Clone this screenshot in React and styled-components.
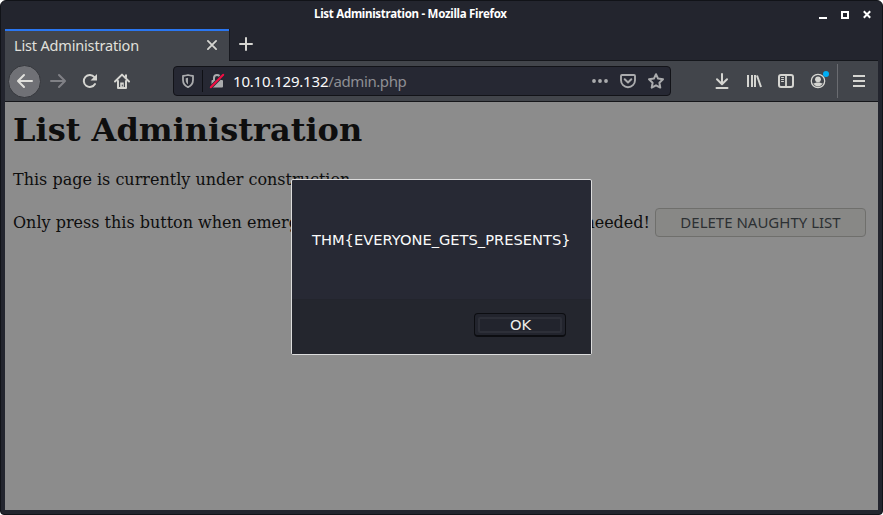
import React from 'react';
import styled, { createGlobalStyle } from 'styled-components';

const GlobalStyle = createGlobalStyle`
  * { box-sizing: border-box; }
  html, body { margin: 0; background: #fff; overflow: hidden; }
`;

const Window = styled.div`
  width: 883px;
  height: 515px;
  display: flex;
  flex-direction: column;
  padding: 0 4px 4px;
  border: 1px solid #111318;
  border-radius: 6px 6px 4px 4px;
  background: #23252e;
  font-family: 'Noto Sans', sans-serif;
  overflow: hidden;
`;

const TitleBar = styled.header`
  height: 28px;
  flex: none;
  display: grid;
  grid-template-columns: 309px 1fr auto;
  align-items: center;
  color: #fff;
`;

const WindowTitle = styled.div`
  grid-column: 2;
  padding-bottom: 3px;
  font-size: 11.5px;
  font-weight: 700;
  letter-spacing: -0.28px;
  white-space: nowrap;
`;

const WindowButtons = styled.div`
  display: flex;
  margin: 0 7px 3px 0;
`;

const TabStrip = styled.div`
  height: 32px;
  flex: none;
  display: flex;
`;

const Tab = styled.div`
  width: 224px;
  height: 32px;
  display: flex;
  align-items: center;
  justify-content: space-between;
  padding: 0 12px 2px 9px;
  border-top: 2px solid #2a76f0;
  background: #42454b;
  color: #e0e0dc;
  font-size: 14.5px;
  letter-spacing: -0.17px;
  white-space: nowrap;
`;

const TabSpacer = styled.div`
  flex: 1;
  padding: 7px 0 0 8px;
  border-left: 1px solid #17191f;
  border-bottom: 1px solid #15171c;
`;

const Toolbar = styled.nav`
  height: 41px;
  flex: none;
  display: flex;
  align-items: center;
  background: #42454b;
  border-bottom: 1px solid #15161a;
`;

const Icon = styled.svg`
  display: block;
  flex: none;
  overflow: visible;
  fill: none;
  stroke: ${(p) => p.$color || '#d5d5d1'};
  stroke-width: ${(p) => p.$weight || 2};
  stroke-linecap: round;
  stroke-linejoin: round;
`;

const BackButton = styled.button`
  width: 33px;
  height: 33px;
  margin-left: 3px;
  padding: 0;
  display: grid;
  place-items: center;
  border: 1px solid #35373c;
  border-radius: 50%;
  background: #707176;
`;

const NavIcons = styled.div`
  display: flex;
  gap: 16px;
  margin-left: 9px;
`;

const AddressBar = styled.div`
  width: 498px;
  height: 30px;
  margin-left: 43px;
  padding: 0 6px;
  display: flex;
  align-items: center;
  border: 1px solid #121318;
  border-radius: 4px;
  background: #262833;
`;

const Separator = styled.span`
  width: 1px;
  height: ${(p) => p.$height}px;
  margin: ${(p) => p.$margin};
  background: ${(p) => p.$color};
`;

const Address = styled.div`
  flex: 1;
  margin-left: 8px;
  color: #fafafa;
  font-size: 15px;
  letter-spacing: -0.2px;
  white-space: nowrap;
`;

const Path = styled.span`
  color: #8e8f94;
  letter-spacing: -0.4px;
`;

const AddressActions = styled.div`
  display: flex;
  gap: 12px;
`;

const Tools = styled.div`
  display: flex;
  margin-left: 43px;
  gap: 16px;
`;

const Viewport = styled.main`
  flex: 1;
  display: grid;
  position: relative;
  background: #8c8c8c;
  color: #0e0e0e;
  font-family: 'DejaVu Serif', serif;
  font-size: 16px;
`;

const Page = styled.div`
  padding: 9px 8px 8px;
`;

const Heading = styled.h1`
  margin: 0;
  font-size: 32px;
  line-height: 38px;
`;

const Paragraph = styled.p`
  margin: 21px 0 0;
  line-height: 19px;
`;

const ActionLine = styled.div`
  display: flex;
  align-items: center;
  height: 29px;
  margin-top: 19px;
`;

const Sentence = styled.div`
  width: 637px;
  display: flex;
  justify-content: space-between;
  white-space: nowrap;
`;

const DeleteButton = styled.button`
  width: 211px;
  height: 29px;
  margin-left: 5px;
  padding: 0 0 1px;
  border: 1px solid #6f6f6c;
  border-radius: 4px;
  background: #888886;
  color: #2c3033;
  font: 15px 'Noto Sans', sans-serif;
  white-space: nowrap;
`;

const Dialog = styled.section`
  position: absolute;
  left: 286px;
  top: 77px;
  width: 301px;
  height: 176px;
  display: flex;
  flex-direction: column;
  border: 1px solid #dcdcdc;
  border-radius: 2px;
  background: #272934;
  color: #fafafa;
  font: 14.667px 'DejaVu Sans', sans-serif;
`;

const Message = styled.div`
  height: 119px;
  padding: 0 20px;
  display: flex;
  align-items: center;
  white-space: nowrap;
`;

const DialogFooter = styled.footer`
  flex: 1;
  display: flex;
  justify-content: flex-end;
  align-items: flex-start;
  padding: 13px 25px 0 0;
  border-top: 1px solid #23252d;
  background: #24262e;
`;

const OkButton = styled.button`
  width: 92px;
  height: 24px;
  padding: 3px;
  border: 1px solid #0c0d11;
  border-bottom-width: 2px;
  border-radius: 4px;
  background: #22242d;
  color: #eeeeea;
  font: 14.667px 'DejaVu Sans', sans-serif;
`;

const FocusRing = styled.span`
  height: 16px;
  display: flex;
  align-items: center;
  justify-content: center;
  padding: 0 0 1px 1px;
  border: 2px solid #2d2f38;
  border-radius: 2px;
  line-height: 12px;
`;

export default function App() {
  return (
    <>
      <GlobalStyle />
      <Window>
        <TitleBar>
          <WindowTitle>List Administration - Mozilla Firefox</WindowTitle>
          <WindowButtons>
            <Icon width="55" height="10" viewBox="0 0 55 10" $color="#fff">
              <path d="M3 9h8M26 3h6v6h-6z" strokeLinecap="butt" strokeLinejoin="miter" />
              <path d="M48.5 3l5 5M53.5 3l-5 5" strokeLinecap="square" />
            </Icon>
          </WindowButtons>
        </TitleBar>

        <TabStrip>
          <Tab>
            List Administration
            <Icon width="10" height="10" viewBox="0 0 10 10" $weight={1.8}>
              <path d="M.9.9l8.2 8.2M9.1.9L.9 9.1" />
            </Icon>
          </Tab>
          <TabSpacer>
            <Icon width="16" height="16" viewBox="0 0 16 16">
              <path d="M8 2v12M2 8h12" />
            </Icon>
          </TabSpacer>
        </TabStrip>

        <Toolbar>
          <BackButton aria-label="Back">
            <Icon width="16" height="16" viewBox="0 0 16 16" $color="#e0e0dc">
              <path d="M15 8H1.5M7 2L1 8l6 6" />
            </Icon>
          </BackButton>
          <NavIcons>
            <Icon width="16" height="16" viewBox="0 0 16 16" $color="#808186">
              <path d="M1 8h13.5M9 2l6 6-6 6" />
            </Icon>
            <Icon width="16" height="16" viewBox="0 0 16 16">
              <path d="M13 11a6 6 0 1 1-.6-6.9" />
              <path d="M15 1v6.5H8.5z" fill="#d5d5d1" stroke="none" />
            </Icon>
            <Icon width="16" height="16" viewBox="0 0 16 16">
              <path d="M1 8.5L8 1.6l7 6.9M4 8v7h8V8" />
              <path d="M11 1.5h2v4l-2-2z" fill="#d5d5d1" stroke="none" />
              <path d="M6.2 15V9.5h3.6V15z" fill="#d5d5d1" stroke="none" />
              <path d="M8.3 12v1" stroke="#42454b" strokeWidth="1" />
            </Icon>
          </NavIcons>

          <AddressBar>
            <Icon width="16" height="16" viewBox="0 0 16 16" $color="#aaabad" $weight={1.8}>
              <path d="M8 2c2 .6 3.5.8 5 1v4c0 3.2-2 5.8-5 7.2C5 12.8 3 10.2 3 7V3c1.5-.2 3-.4 5-1z" />
              <path d="M8 4.8v6.7C6.5 10.4 5.7 9 5.7 7V5.2z" fill="#aaabad" stroke="none" />
            </Icon>
            <Separator $height={22} $margin="0 6px" $color="#0f1015" />
            <Icon width="16" height="16" viewBox="0 0 16 16" $color="#aaabad" $weight={2}>
              <path d="M5 8V5a3 3 0 0 1 6 0v3" />
              <rect x="2.5" y="7" width="11.5" height="7.5" rx="1" fill="#aaabad" stroke="none" />
              <path d="M1.8 14.2L14.2 1.8" stroke="#262833" strokeWidth="3.4" strokeLinecap="butt" />
              <path d="M1.8 14.2L14.2 1.8" stroke="#f30e43" strokeWidth="2" />
            </Icon>
            <Address>10.10.129.132<Path>/admin.php</Path></Address>
            <AddressActions>
              <Icon width="16" height="16" viewBox="0 0 16 16" $color="#aaabad">
                <path d="M2 8h.01M8 8h.01M14 8h.01" strokeWidth="3.8" />
              </Icon>
              <Icon width="16" height="16" viewBox="0 0 16 16" $color="#aaabad" $weight={1.9}>
                <path d="M2 2h12q1 0 1 1v4.2a7 7 0 0 1-14 0V3q0-1 1-1z" />
                <path d="M4.7 6.3L8 9.5l3.3-3.2" strokeWidth="2" />
              </Icon>
              <Icon width="16" height="16" viewBox="0 0 16 16" $color="#aaabad" $weight={2}>
                <path d="M8 1.2l2.1 4.4 4.9.7-3.6 3.4.9 4.9L8 12.3l-4.3 2.3.9-4.9L1 6.3l4.9-.7z" />
              </Icon>
            </AddressActions>
          </AddressBar>

          <Tools>
            <Icon width="16" height="16" viewBox="0 0 16 16">
              <path d="M8 1v10M3 6.3L8 11.2l5-4.9M2.5 15h11" />
            </Icon>
            <Icon width="16" height="16" viewBox="0 0 16 16">
              <path d="M2 2v12M6 2v12M9 2v12M11 2.5L15 14" strokeLinecap="butt" />
            </Icon>
            <Icon width="16" height="16" viewBox="0 0 16 16">
              <rect x="1" y="2" width="14" height="12" rx="2" />
              <path d="M8 2v12" strokeWidth="1.8" />
              <path d="M3.5 4.5h2M3.5 6.5h2M3.5 8.5h2" strokeWidth="1" />
            </Icon>
            <Icon width="16" height="16" viewBox="0 0 16 16" $weight={1.3}>
              <circle cx="8" cy="8" r="6.7" />
              <circle cx="8" cy="6.3" r="2.9" fill="#d5d5d1" stroke="none" />
              <path d="M3.3 10.3c1.8 0 2.2-.5 2.9-.9h3.6c.7.4 1.1.9 2.9.9A5.2 5.2 0 0 1 8 13.4a5.2 5.2 0 0 1-4.7-3.1z" fill="#d5d5d1" stroke="none" />
              <circle cx="16" cy="1" r="3" fill="#00aef5" stroke="none" />
            </Icon>
          </Tools>
          <Separator $height={34} $margin="0 14px 0 11px" $color="#6a6c71" />
          <Icon width="14" height="14" viewBox="0 0 14 14">
            <path d="M1 2h12M1 7h12M1 12h12" strokeLinecap="butt" />
          </Icon>
        </Toolbar>

        <Viewport>
          <Page>
            <Heading>List Administration</Heading>
            <Paragraph>This page is currently under construction.</Paragraph>
            <ActionLine>
              <Sentence>
                <span>Only press this button when emergency</span>
                <span>needed!</span>
              </Sentence>
              <DeleteButton>DELETE NAUGHTY LIST</DeleteButton>
            </ActionLine>
          </Page>
          <Dialog role="dialog">
            <Message>THM&#123;EVERYONE_GETS_PRESENTS&#125;</Message>
            <DialogFooter>
              <OkButton><FocusRing>OK</FocusRing></OkButton>
            </DialogFooter>
          </Dialog>
        </Viewport>
      </Window>
    </>
  );
}
